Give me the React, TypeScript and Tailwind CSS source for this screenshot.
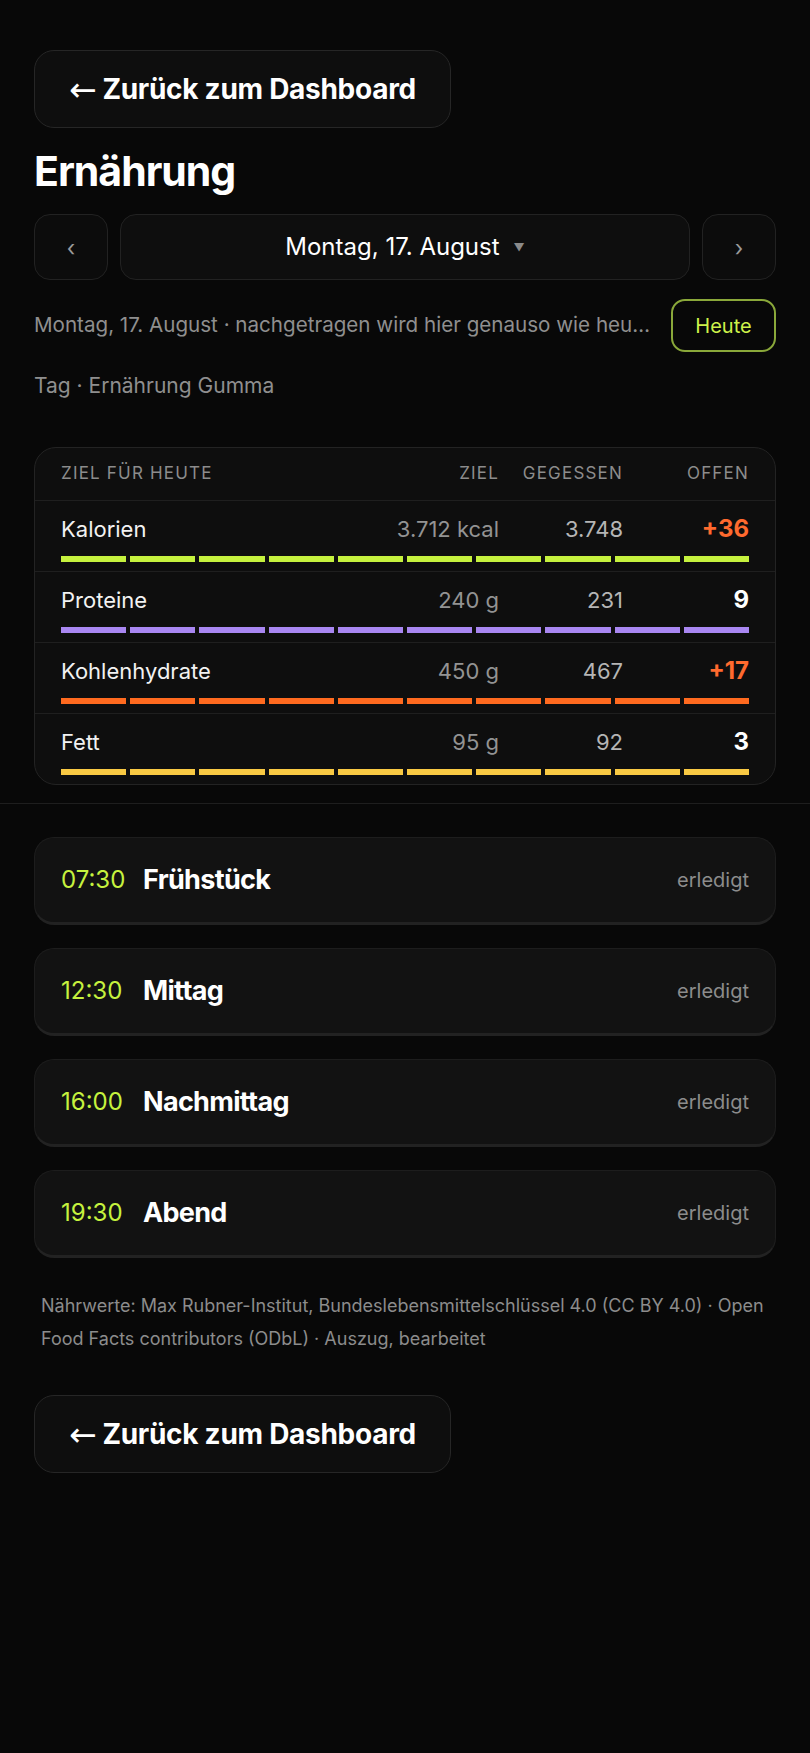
const macros = [
  { name: "Kalorien", goal: "3.712 kcal", eaten: "3.748", open: "+36", over: true, color: "bg-[#c6f23e]" },
  { name: "Proteine", goal: "240 g", eaten: "231", open: "9", over: false, color: "bg-[#a987f2]" },
  { name: "Kohlenhydrate", goal: "450 g", eaten: "467", open: "+17", over: true, color: "bg-[#ff6a1f]" },
  { name: "Fett", goal: "95 g", eaten: "92", open: "3", over: false, color: "bg-[#f9c943]" },
];

const meals = [
  { time: "07:30", name: "Frühstück" },
  { time: "12:30", name: "Mittag" },
  { time: "16:00", name: "Nachmittag" },
  { time: "19:30", name: "Abend" },
];

const segments = [0, 1, 2, 3, 4, 5, 6, 7, 8, 9];

const BackButton = () => (
  <button className="flex h-[78px] items-center rounded-[20px] border border-[#262626] bg-[#0e0e0e] px-[34px] text-[28px] font-bold tracking-[-0.01em] text-white">
    <span className="mr-[6px] font-['DejaVu_Sans'] text-[33px] font-normal leading-none">←</span>
    Zurück zum Dashboard
  </button>
);

const App = () => {
  return (
    <div className="min-h-screen bg-[#080808] font-[Inter,sans-serif] text-white">
      <div className="px-[34px] pt-[50px]">
        <BackButton />

        <h1 className="mt-[19px] text-[41px] font-bold leading-[48px] tracking-tight">Ernährung</h1>

        <div className="mt-[19px] flex h-[66px] gap-3">
          <button className="flex w-[74px] items-center justify-center rounded-2xl border border-[#222] bg-[#0c0c0c] pt-[3px] text-[22px] text-[#9a9a9a]">
            ‹
          </button>
          <button className="flex flex-1 items-center justify-center gap-[14px] rounded-2xl border border-[#222] bg-[#0e0e0e]">
            <span className="text-[24px] text-white">Montag, 17. August</span>
            <span className="text-[11px] text-[#8a8a8a]">▼</span>
          </button>
          <button className="flex w-[74px] items-center justify-center rounded-2xl border border-[#222] bg-[#0c0c0c] pt-[3px] text-[22px] text-[#9a9a9a]">
            ›
          </button>
        </div>

        <div className="mt-[19px] flex h-[53px] items-center gap-[20px]">
          <p className="min-w-0 flex-1 truncate text-[20.6px] text-[#8f8f8f]">
            Montag, 17. August · nachgetragen wird hier genauso wie heute erfasst
          </p>
          <button className="flex h-[53px] w-[105px] shrink-0 items-center justify-center rounded-[14px] border-2 border-[#8aa83a] text-[20px] text-[#cdf24a]">
            Heute
          </button>
        </div>

        <p className="mt-[20px] text-[21px] leading-[28px] text-[#8f8f8f]">Tag · Ernährung Gumma</p>

        <div className="mt-[47px] overflow-hidden rounded-[22px] border border-[#232323] bg-[#0e0e0e]">
          <div className="grid h-[53px] grid-cols-[1fr_120px_124px_126px] items-center border-b border-[#1f1f1f] px-[26px] text-[17px] uppercase tracking-[0.07em] text-[#8c8c8c]">
            <span>Ziel für heute</span>
            <span className="text-right">Ziel</span>
            <span className="text-right">Gegessen</span>
            <span className="text-right">Offen</span>
          </div>
          {macros.map((m, i) => (
            <div
              key={m.name}
              className={`px-[26px] pb-[9px] pt-[10px] ${i < macros.length - 1 ? "border-b border-[#1f1f1f]" : ""}`}
            >
              <div className="grid h-[28px] grid-cols-[1fr_120px_124px_126px] items-center">
                <span className="text-[22px] text-[#f2f2f2]">{m.name}</span>
                <span className="text-right text-[22px] text-[#939393]">{m.goal}</span>
                <span className="text-right text-[22px] text-[#b5b5b5]">{m.eaten}</span>
                <span className={`text-right text-[24px] font-bold ${m.over ? "text-[#ff6a2e]" : "text-white"}`}>
                  {m.open}
                </span>
              </div>
              <div className="mt-[17px] flex h-[6px] gap-1">
                {segments.map((s) => (
                  <div key={s} className={`flex-1 ${m.color}`} />
                ))}
              </div>
            </div>
          ))}
        </div>
      </div>

      <div className="mt-[18px] h-px bg-[#1e1e1e]" />

      <div className="px-[34px] pb-[60px] pt-[33px]">
        <div className="flex flex-col gap-[23px]">
          {meals.map((m) => (
            <div
              key={m.time}
              className="flex h-[88px] items-center rounded-[20px] border border-b-[3px] border-[#1d1d1d] border-b-[#222] bg-[#121212] px-[26px]"
            >
              <span className="w-[66px] text-[24px] text-[#c6f23e]">{m.time}</span>
              <span className="ml-4 text-[27px] font-bold tracking-tight text-white">{m.name}</span>
              <span className="ml-auto text-[20px] text-[#8c8c8c]">erledigt</span>
            </div>
          ))}
        </div>

        <p className="mt-[31px] px-[7px] text-[18px] leading-[33px] text-[#8c8c8c]">
          Nährwerte: Max Rubner-Institut, Bundeslebensmittelschlüssel 4.0 (CC BY 4.0) · Open Food Facts contributors (ODbL) · Auszug, bearbeitet
        </p>

        <div className="mt-[40px]">
          <BackButton />
        </div>
      </div>
    </div>
  );
};

export default App;
